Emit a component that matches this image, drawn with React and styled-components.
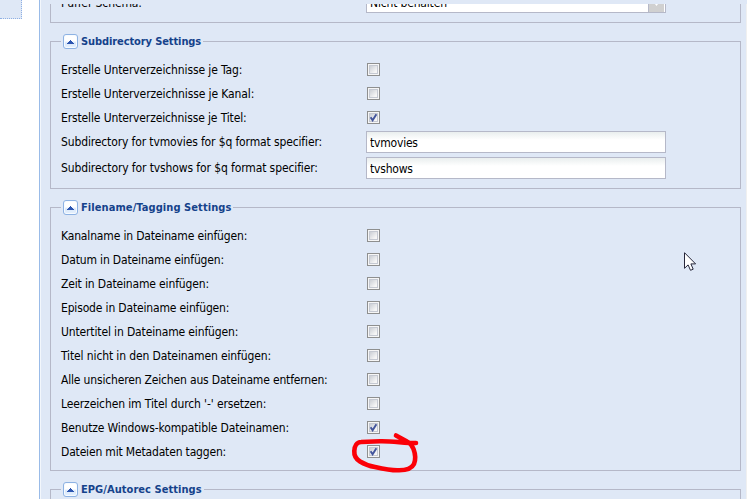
import React from "react";
import styled, { createGlobalStyle, css } from "styled-components";

const directoryRows = [
  { label: "Erstelle Unterverzeichnisse je Tag:", spacing: -0.12 },
  { label: "Erstelle Unterverzeichnisse je Kanal:", spacing: -0.11 },
  {
    label: "Erstelle Unterverzeichnisse je Titel:",
    spacing: -0.13,
    checked: true,
  },
];

const subdirectoryFields = [
  {
    label: "Subdirectory for tvmovies for $q format specifier:",
    spacing: -0.13,
    value: "tvmovies",
  },
  {
    label: "Subdirectory for tvshows for $q format specifier:",
    spacing: -0.11,
    value: "tvshows",
  },
];

const filenameRows = [
  { label: "Kanalname in Dateiname einfügen:", spacing: -0.16 },
  { label: "Datum in Dateiname einfügen:", spacing: -0.15 },
  { label: "Zeit in Dateiname einfügen:", spacing: -0.15 },
  { label: "Episode in Dateiname einfügen:", spacing: -0.16 },
  { label: "Untertitel in Dateiname einfügen:", spacing: -0.14 },
  { label: "Titel nicht in den Dateinamen einfügen:", spacing: -0.12 },
  { label: "Alle unsicheren Zeichen aus Dateiname entfernen:", spacing: -0.17 },
  { label: "Leerzeichen im Titel durch '-' ersetzen:", spacing: -0.11 },
  {
    label: "Benutze Windows-kompatible Dateinamen:",
    spacing: -0.14,
    checked: true,
  },
  { label: "Dateien mit Metadaten taggen:", spacing: -0.17, checked: true },
];

const App = () => (
  <>
    <GlobalStyle />
    <Page>
      <Sidebar>
        <SidebarItem />
      </Sidebar>
      <Panel>
        <ScrollArea>
          <ClippedFieldset>
            <ClippedRow>
              <Label $spacing={-0.1}>Puffer Schema:</Label>
              <Combo>
                <ComboText>Nicht behalten</ComboText>
                <ComboTrigger>
                  <svg width="3" height="2" viewBox="0 0 3 2">
                    <path d="M0 0H3L1.5 2Z" fill="#fff" />
                  </svg>
                </ComboTrigger>
              </Combo>
            </ClippedRow>
          </ClippedFieldset>
          <Section title="Subdirectory Settings" spacing={-0.1}>
            {directoryRows.map((row) => (
              <CheckRow key={row.label} {...row} />
            ))}
            {subdirectoryFields.map((field) => (
              <Row key={field.label} $tall>
                <Label $spacing={field.spacing}>{field.label}</Label>
                <Input defaultValue={field.value} />
              </Row>
            ))}
          </Section>
          <Section title="Filename/Tagging Settings" spacing={0.08}>
            {filenameRows.map((row) => (
              <CheckRow key={row.label} {...row} />
            ))}
          </Section>
          <Section title="EPG/Autorec Settings" spacing={0.05} />
        </ScrollArea>
      </Panel>
      <RightEdge />
      <Marker />
      <Cursor />
    </Page>
  </>
);

const Section = ({ title, spacing, children }) => (
  <Fieldset>
    <Legend>
      <Toggle>
        <svg width="7" height="4" viewBox="0 0 7 4" shapeRendering="crispEdges">
          <path d="M3 0h1v1h1v1h1v1h1v1H0V3h1V2h1V1h1z" fill="#2c55b0" />
        </svg>
      </Toggle>
      <Title $spacing={spacing}>{title}</Title>
    </Legend>
    {children}
  </Fieldset>
);

const CheckRow = ({ label, checked, spacing }) => (
  <Row>
    <Label $spacing={spacing}>{label}</Label>
    <Checkbox>
      <CheckFace>
        {checked && (
          <svg width="9" height="9" viewBox="0 0 9 9">
            <path
              d="M1.6 4.3L3.6 7.3L7.4 1.2"
              fill="none"
              stroke="#43559c"
              strokeWidth="1.9"
            />
          </svg>
        )}
      </CheckFace>
    </Checkbox>
  </Row>
);

const Marker = () => (
  <MarkerLayer width="76" height="48" viewBox="348 430 76 48">
    <path
      d="M416 443C404 443 392 441 380 441.3L361 442C357 442 354.5 446 354.3 451C354 456 356 459 360 461.5C364 464 369 466 375 467C384 469 391 470.5 398 470.3C406 470.5 412 468 414 464C416 459 415 453 413.5 449C412 445 410 443 407 441.5L396 435.5"
      fill="none"
      stroke="#fb0007"
      strokeWidth="4.6"
      strokeLinecap="round"
      strokeLinejoin="round"
    />
  </MarkerLayer>
);

const Cursor = () => (
  <CursorLayer width="13" height="20" viewBox="0 0 13 20">
    <path
      d="M.5 .7V16.3L4.1 12.9L6.5 18.3L9.2 17.2L6.9 11.9H11.6Z"
      fill="#fff"
      stroke="#26263a"
      strokeWidth="1"
    />
  </CursorLayer>
);

const GlobalStyle = createGlobalStyle`
  * {
    box-sizing: border-box;
  }
  body {
    margin: 0;
    overflow: hidden;
    background: #fff;
  }
`;

const Page = styled.div`
  display: flex;
  position: relative;
  width: 747px;
  height: 499px;
  overflow: hidden;
  background: #fff;
  font-family: "DejaVu Sans Condensed", "DejaVu Sans", sans-serif;
  font-stretch: condensed;
  font-size: 12px;
  color: #000;
`;

const Sidebar = styled.div`
  width: 39px;
  flex: none;
`;

const SidebarItem = styled.div`
  width: 22px;
  height: 19px;
  background: #dfe8f6;
  border-right: 1px dotted #8fb0e4;
  border-bottom: 1px dotted #8fb0e4;
`;

const Panel = styled.div`
  flex: 1;
  padding-top: 4px;
  border-left: 1px solid #99bbe8;
  box-shadow: inset 1px 0 #f3f7fc;
  background: #dfe8f6;
`;

const ScrollArea = styled.div`
  height: 495px;
  padding: 0 5px 0 10px;
  overflow: hidden;
`;

const RightEdge = styled.div`
  width: 1px;
  flex: none;
  border-top: 4px solid #dfe8f6;
  background: #f0f0f0;
`;

const Fieldset = styled.div`
  min-height: 60px;
  margin-bottom: 18px;
  padding: 0 10px 6px;
  border: 1px solid #b5b8c8;
`;

const ClippedFieldset = styled.div`
  height: 19px;
  margin-bottom: 18px;
  padding: 0 10px;
  overflow: hidden;
  border: 1px solid #b5b8c8;
  border-top: 0;
`;

const Legend = styled.div`
  display: flex;
  align-items: center;
  width: fit-content;
  height: 17px;
  margin: -9px 0 8px;
  padding: 0 2px;
  background: #dfe8f6;
`;

const Toggle = styled.div`
  display: flex;
  align-items: center;
  justify-content: center;
  width: 15px;
  height: 15px;
  margin-right: 3px;
  border: 1px solid #8db2e3;
  border-radius: 3px;
  background: linear-gradient(#fff 0 45%, #d9e8fb 60%, #e6f1fd);
  box-shadow: inset 0 0 0 1px #f7fbff;
`;

const Title = styled.span`
  color: #15428b;
  font-size: 11px;
  font-weight: bold;
  line-height: 15px;
  white-space: nowrap;
  letter-spacing: ${({ $spacing }) => $spacing || 0}px;
`;

const Row = styled.div`
  display: flex;
  height: 24px;
  ${({ $tall }) =>
    $tall &&
    css`
      height: 26px;
    `}
`;

const ClippedRow = styled(Row)`
  margin-top: -13px;
`;

const Label = styled.span`
  width: 305px;
  flex: none;
  line-height: 25px;
  white-space: nowrap;
  letter-spacing: ${({ $spacing }) => $spacing || 0}px;
`;

const Checkbox = styled.span`
  width: 13px;
  height: 13px;
  margin: 5px 0 0 1px;
  padding: 1px;
  border: 1px solid #8e8f8f;
  background: #f6f6f6;
`;

const CheckFace = styled.span`
  display: flex;
  width: 9px;
  height: 9px;
  border: 1px solid #c5c9d2;
  background: linear-gradient(135deg, #cbcfd5, #f6f6f6 80%);
  svg {
    flex: none;
    margin: -1px;
  }
`;

const Input = styled.input`
  width: 300px;
  height: 22px;
  margin: 1px 0 0;
  padding: 1px 3px 0;
  border: 1px solid #b5b8c8;
  outline: 0;
  background: linear-gradient(#e9eeee, #fff 8px);
  font: inherit;
  letter-spacing: -0.2px;
  color: #000;
`;

const Combo = styled.div`
  display: flex;
  width: 300px;
  height: 22px;
  border: 1px solid #b5b8c8;
  background: #fff;
`;

const ComboText = styled.span`
  flex: 1;
  padding-left: 3px;
  line-height: 23px;
  letter-spacing: -0.17px;
`;

const ComboTrigger = styled.span`
  display: flex;
  justify-content: center;
  width: 17px;
  padding-top: 12px;
  border-left: 1px solid #b5b8c8;
  border-right: 1px solid #fff;
  background: #d0d0d0;
`;

const MarkerLayer = styled.svg`
  position: absolute;
  left: 348px;
  top: 430px;
`;

const CursorLayer = styled.svg`
  position: absolute;
  left: 684px;
  top: 252px;
`;

export default App;
